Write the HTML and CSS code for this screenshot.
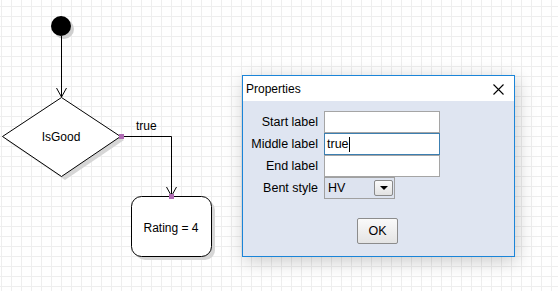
FILE: index.html
```html
<!DOCTYPE html>
<html>
<head>
<meta charset="utf-8">
<link rel="stylesheet" href="styles.css">
</head>
<body>
<div class="canvas">
  <svg class="diagram" width="558" height="291" viewBox="0 0 558 291">
    <circle cx="64" cy="29" r="10" fill="#cfcfcf"/>
    <circle cx="61" cy="26" r="10" fill="#000"/>
    <line x1="61.5" y1="36" x2="61.5" y2="97" stroke="#000"/>
    <polyline points="56.5,88 61.5,97 66.5,88" fill="none" stroke="#000"/>

    <polygon points="6,140 65,101 124,140 65,180" fill="#d6d6d6"/>
    <polygon points="2.5,136.5 61.5,97.5 120.5,136.5 61.5,176.5" fill="#fff" stroke="#000"/>
    <text x="61" y="141" class="dtext" text-anchor="middle">IsGood</text>

    <polyline points="120,136.5 171.5,136.5 171.5,196" fill="none" stroke="#000"/>
    <polyline points="166.5,187 171.5,196 176.5,187" fill="none" stroke="#000"/>
    <text x="136" y="130" class="dtext">true</text>

    <rect x="135" y="200" width="80" height="60" rx="10" fill="#d6d6d6"/>
    <rect x="131.5" y="196.5" width="80" height="60" rx="10" fill="#fff" stroke="#000"/>
    <text x="171" y="232" class="dtext" text-anchor="middle">Rating = 4</text>

    <rect x="119" y="134" width="5" height="5" fill="#b06cb4"/>
    <rect x="169" y="194" width="5" height="5" fill="#b06cb4"/>
  </svg>

  <div class="dialog">
    <div class="titlebar">
      <span class="title">Properties</span>
      <svg class="close" width="11" height="11" viewBox="0 0 11 11">
        <path d="M0.5 0.5 L10.5 10.5 M10.5 0.5 L0.5 10.5" stroke="#000" stroke-width="1.1"/>
      </svg>
    </div>
    <div class="body">
      <div class="form">
        <label class="lbl">Start label</label>
        <div class="field"></div>
        <label class="lbl">Middle label</label>
        <div class="field focused"><span>true</span><span class="caret"></span></div>
        <label class="lbl">End label</label>
        <div class="field"></div>
        <label class="lbl">Bent style</label>
        <div class="combo-row">
          <div class="combo">
            <span class="combo-val">HV</span>
            <span class="combo-btn"><span class="tri"></span></span>
          </div>
        </div>
      </div>
      <div class="actions">
        <button class="ok">OK</button>
      </div>
    </div>
  </div>
</div>
</body>
</html>
```

FILE: styles.css
```css
html, body {
  margin: 0;
  padding: 0;
}
body {
  width: 558px;
  height: 291px;
  overflow: hidden;
  background-color: #fff;
  background-image:
    linear-gradient(to right, #eeeeee 1px, transparent 1px),
    linear-gradient(to bottom, #eeeeee 1px, transparent 1px);
  background-size: 10px 10px;
  background-position: 1px 6px;
  font-family: "Liberation Sans", Arial, sans-serif;
  font-size: 12px;
}
.canvas {
  position: relative;
  width: 558px;
  height: 291px;
}
.diagram {
  position: absolute;
  left: 0;
  top: 0;
}
.dtext {
  font-family: "Liberation Sans", Arial, sans-serif;
  font-size: 12px;
  fill: #000;
}
.dialog {
  position: absolute;
  left: 242px;
  top: 75px;
  width: 271px;
  height: 180px;
  border: 1px solid #1a84d8;
  background: #dfe5f1;
  box-shadow: 2px 4px 18px rgba(0, 0, 0, 0.22);
  display: flex;
  flex-direction: column;
}
.titlebar {
  height: 25px;
  background: #fff;
  display: flex;
  align-items: center;
  justify-content: space-between;
  padding: 0 10px 0 3px;
}
.title {
  font-size: 12px;
  color: #000;
  margin-top: 1px;
}
.close {
  display: block;
  margin-top: 1px;
}
.body {
  flex: 1;
  padding-top: 10px;
  display: flex;
  flex-direction: column;
}
.form {
  display: grid;
  grid-template-columns: 75px 116px;
  grid-auto-rows: 22px;
  column-gap: 6px;
}
.lbl {
  text-align: right;
  line-height: 22px;
  font-size: 12.5px;
  color: #000;
  white-space: nowrap;
}
.field {
  box-sizing: border-box;
  height: 22px;
  background: #fff;
  border: 1px solid #a5a5a5;
  display: flex;
  align-items: center;
  padding-left: 2px;
  font-size: 12.5px;
  color: #000;
}
.field.focused {
  border-color: #3c7fb1;
}
.caret {
  display: inline-block;
  width: 1px;
  height: 15px;
  background: #000;
}
.combo-row {
  display: flex;
}
.combo {
  box-sizing: border-box;
  width: 71px;
  height: 22px;
  border: 1px solid #a0a0a0;
  background: #dde3ef;
  display: flex;
  align-items: center;
  justify-content: space-between;
  padding: 0 1px 0 3px;
  font-size: 12.5px;
}
.combo-val {
  color: #000;
}
.combo-btn {
  box-sizing: border-box;
  width: 19px;
  height: 16px;
  border: 1px solid #8a8a8a;
  border-radius: 2px;
  background: linear-gradient(#fbfbfb, #e2e2e2);
  display: flex;
  align-items: center;
  justify-content: center;
}
.tri {
  width: 0;
  height: 0;
  border-left: 4px solid transparent;
  border-right: 4px solid transparent;
  border-top: 4px solid #000;
}
.actions {
  display: flex;
  justify-content: center;
  padding-top: 19px;
  padding-right: 2px;
}
.ok {
  box-sizing: border-box;
  width: 41px;
  height: 26px;
  border: 1px solid #8c8c8c;
  border-radius: 2px;
  background: linear-gradient(#fafafa, #e4e4e4);
  font-family: "Liberation Sans", Arial, sans-serif;
  font-size: 12.5px;
  color: #000;
  padding: 0;
}
```
